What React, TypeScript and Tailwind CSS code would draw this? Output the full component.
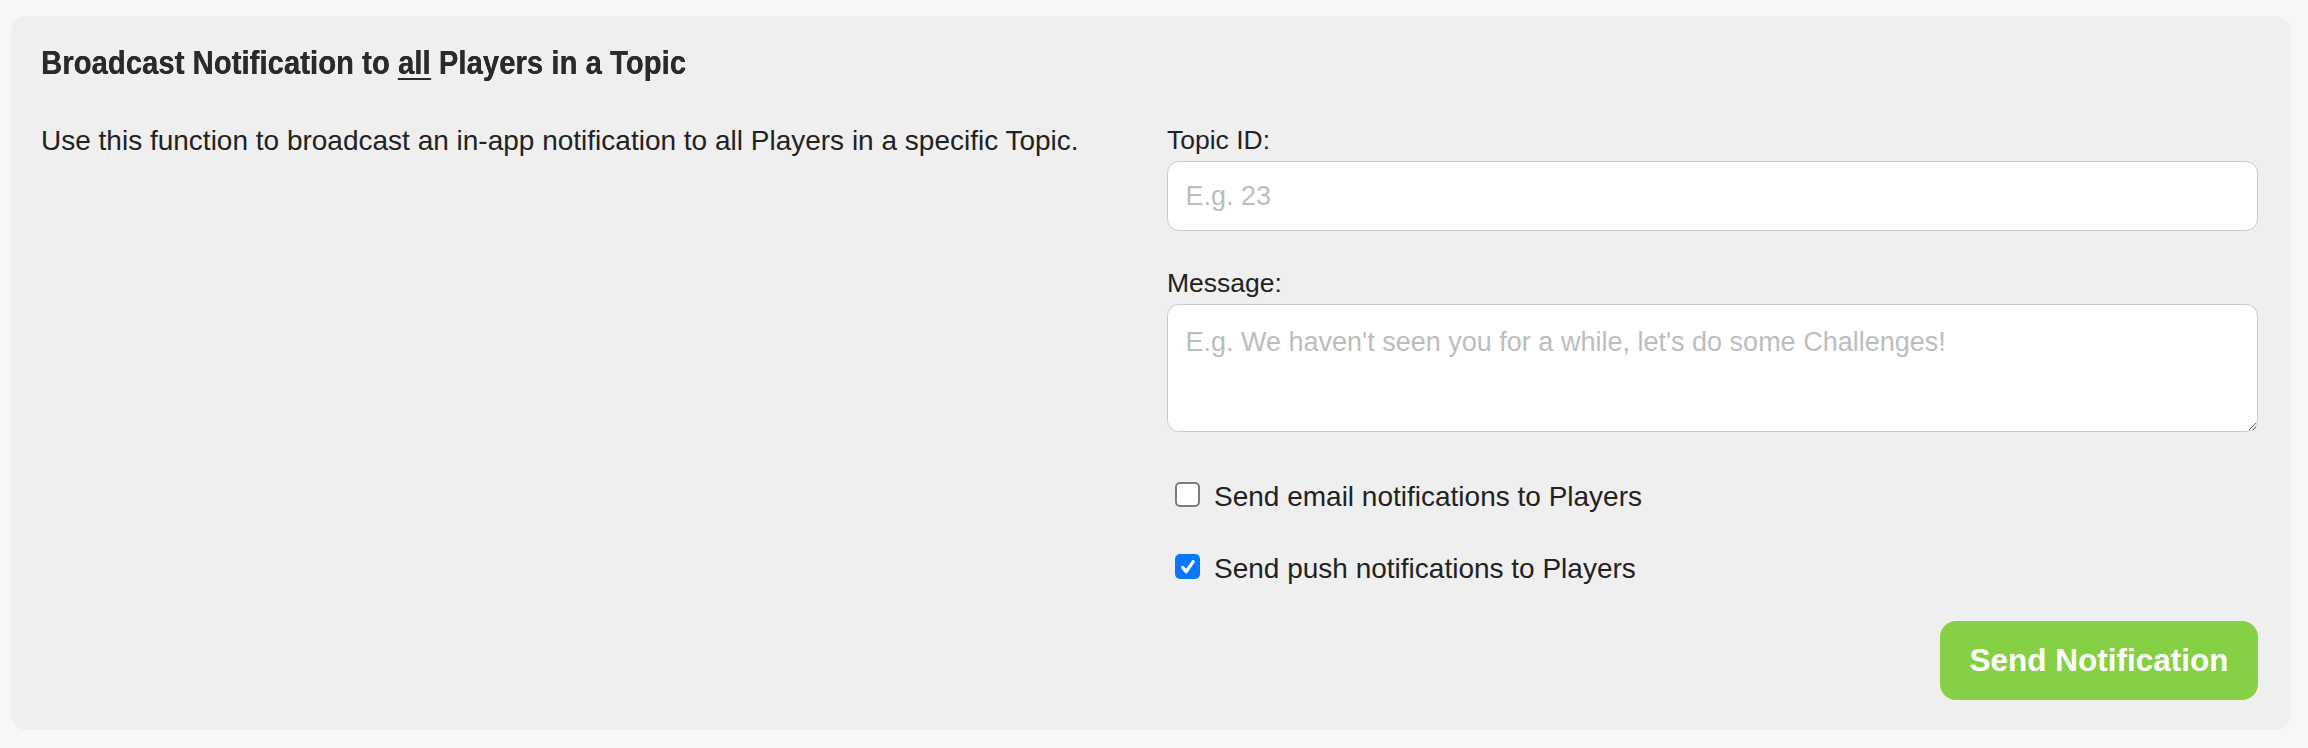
const Checkbox = ({ checked }: { checked: boolean }) =>
  checked ? (
    <span className="mt-[1px] flex h-[25px] w-[25px] shrink-0 items-center justify-center rounded-[5px] bg-[#0a77fd]">
      <svg viewBox="0 0 16 16" className="h-[18px] w-[18px]" fill="none">
        <path d="M3.4 8.4 L6.4 12.2 L12.6 3.2" stroke="#ffffff" strokeWidth="2.8" strokeLinecap="round" strokeLinejoin="round" />
      </svg>
    </span>
  ) : (
    <span className="mt-[1px] block h-[25px] w-[25px] shrink-0 rounded-[5px] border-2 border-[#7b7b7b] bg-white" />
  );

const App = () => {
  const options = [
    { label: "Send email notifications to Players", checked: false },
    { label: "Send push notifications to Players", checked: true },
  ];

  return (
    <div className="min-h-[748px] bg-[#f7f7f7] pt-[16px] pb-[17px] pl-[11px] pr-[17px] font-['Liberation_Sans',Arial,sans-serif] text-[#222222]">
      <div className="rounded-[16px] bg-[#efefef] pt-[28px] pb-[30px] pl-[30px] pr-[33px]">
        {/* condensed heading: no condensed face installed, so squeeze the bold one */}
        <h2 className="origin-left scale-x-[0.87] whitespace-nowrap text-[33.5px] leading-[38px] font-bold tracking-[0.1px] text-[#2a2a2a] [text-shadow:0.4px_0_0_#2a2a2a]">
          Broadcast Notification to <span className="underline decoration-[2px] underline-offset-[4px]">all</span> Players in a Topic
        </h2>

        <div className="mt-[43px] flex gap-[36px]">
          <p className="flex-1 text-[28px] leading-[32px]">
            Use this function to broadcast an in-app notification to all Players in a specific Topic.
          </p>

          <div className="flex w-[1091px] flex-col">
            <label className="text-[26.5px] leading-[30px]">Topic ID:</label>
            <input
              type="text"
              placeholder="E.g. 23"
              className="mt-[6px] block h-[70px] w-full rounded-[12px] border-[1.5px] border-[#cacaca] bg-white px-[17.5px] text-[27px] outline-none placeholder:text-[#bdbdbd]"
            />

            <label className="mt-[37px] text-[26.5px] leading-[30px]">Message:</label>
            <textarea
              placeholder="E.g. We haven't seen you for a while, let's do some Challenges!"
              className="mt-[6px] block h-[128px] w-full rounded-[12px] border-[1.5px] border-[#cacaca] bg-white px-[17.5px] pt-[17px] text-[27px] leading-normal outline-none placeholder:text-[#bdbdbd]"
            />

            <div className="mt-[49px] flex flex-col gap-[40px] pl-[8px]">
              {options.map((o) => (
                <div key={o.label} className="flex items-start gap-[14px]">
                  <Checkbox checked={o.checked} />
                  <span className="text-[28px] leading-[32px]">{o.label}</span>
                </div>
              ))}
            </div>

            <button className="mt-[36px] h-[79px] w-[318px] self-end rounded-[16px] bg-[#86d044] text-[31.5px] font-bold text-white">
              Send Notification
            </button>
          </div>
        </div>
      </div>
    </div>
  );
};

export default App;
